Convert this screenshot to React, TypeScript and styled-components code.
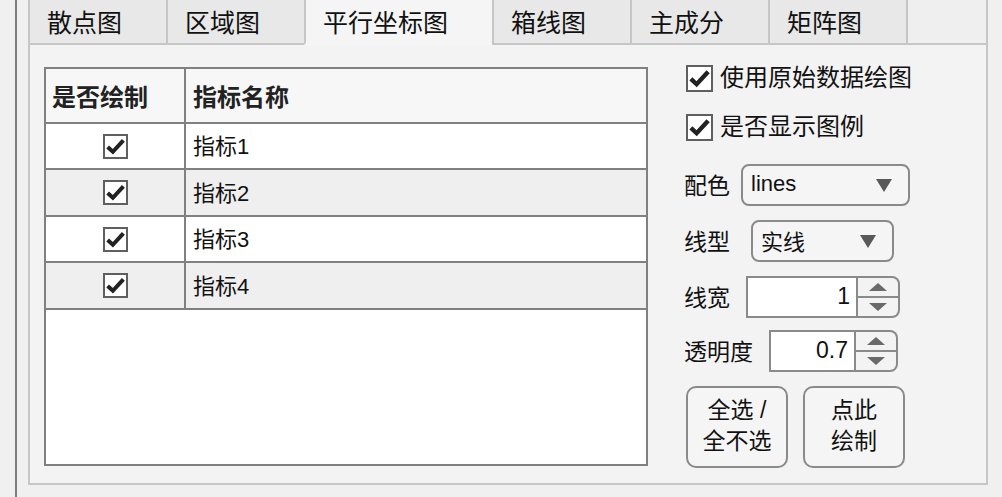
import React from "react";
import styled, { createGlobalStyle } from "styled-components";

const GlobalStyle = createGlobalStyle`
  body {
    margin: 0;
    background: #f0f0f0;
    font-family: "Liberation Sans", "Noto Sans CJK SC", sans-serif;
    color: #1a1a1a;
  }
  * { box-sizing: border-box; }
`;

const tabs = ["散点图", "区域图", "平行坐标图", "箱线图", "主成分", "矩阵图"];
const metrics = ["指标1", "指标2", "指标3", "指标4"];

const Tick = ({ size }: { size: number }): JSX.Element => (
  <svg width={size} height={size} viewBox="0 0 24 24">
    <polyline
      points="3,12.5 9,18 21,5"
      fill="none"
      stroke="#222"
      strokeWidth="4.6"
      strokeLinecap="butt"
      strokeLinejoin="miter"
    />
  </svg>
);

const Spinner = ({ value, width }: { value: string; width: number }): JSX.Element => (
  <SpinBox>
    <SpinField style={{ width }}>{value}</SpinField>
    <SpinArrows>
      <SpinHalf>
        <ArrowUp />
      </SpinHalf>
      <SpinHalf $bottom>
        <ArrowDown />
      </SpinHalf>
    </SpinArrows>
  </SpinBox>
);

const App = (): JSX.Element => {
  return (
    <>
      <GlobalStyle />
      <Page>
        <Frame>
          <TabGroup>
            <TabBar>
              {tabs.map((t, i) => (
                <Tab key={t} $active={i === 2}>
                  {t}
                </Tab>
              ))}
              <TabFiller />
            </TabBar>
            <Panel>
              <Table>
                <HeadRow>
                  <HeadCell $first>是否绘制</HeadCell>
                  <HeadCell>指标名称</HeadCell>
                </HeadRow>
                {metrics.map((m, i) => (
                  <Row key={m} $odd={i % 2 === 1} $h={i % 2 === 0 ? 46 : 47}>
                    <CheckCell>
                      <Box $size={25}>
                        <Tick size={21} />
                      </Box>
                    </CheckCell>
                    <NameCell>{m}</NameCell>
                  </Row>
                ))}
                <EmptyArea />
              </Table>
              <Side>
                <CheckRow $mb={21}>
                  <Box $size={27}>
                    <Tick size={23} />
                  </Box>
                  使用原始数据绘图
                </CheckRow>
                <CheckRow $mb={23}>
                  <Box $size={27}>
                    <Tick size={23} />
                  </Box>
                  是否显示图例
                </CheckRow>
                <Field $mb={14}>
                  <Label $w={57}>配色</Label>
                  <Select $w={169}>
                    <SelectText>lines</SelectText>
                    <Caret />
                  </Select>
                </Field>
                <Field $mb={14}>
                  <Label $w={67}>线型</Label>
                  <Select $w={143}>
                    <SelectText>实线</SelectText>
                    <Caret />
                  </Select>
                </Field>
                <Field $mb={12}>
                  <Label $w={62}>线宽</Label>
                  <Spinner value="1" width={112} />
                </Field>
                <Field $mb={14}>
                  <Label $w={85}>透明度</Label>
                  <Spinner value="0.7" width={87} />
                </Field>
                <Buttons>
                  <Button>
                    全选 /
                    <br />
                    全不选
                  </Button>
                  <Button>
                    点此
                    <br />
                    绘制
                  </Button>
                </Buttons>
              </Side>
            </Panel>
          </TabGroup>
        </Frame>
      </Page>
    </>
  );
};

const Page = styled.div`
  height: 497px;
  padding-left: 15px;
  display: flex;
  overflow: hidden;
`;

const Frame = styled.div`
  border-left: 2px solid #7c7c7c;
  padding-left: 11px;
  display: flex;
  flex-direction: column;
`;

const TabGroup = styled.div`
  width: 960px;
  display: flex;
  flex-direction: column;
`;

const TabBar = styled.div`
  display: flex;
  height: 45px;
`;

const Tab = styled.div<{ $active?: boolean }>`
  height: 45px;
  padding: 3px 44px 0 17px;
  font-size: 25px;
  line-height: 36px;
  font-family: "Noto Sans CJK SC", sans-serif;
  color: #111;
  background: ${(p) => (p.$active ? "#f5f5f5" : "#e8e8e8")};
  border-left: 2px solid #c6c6c6;
  border-bottom: 2px solid ${(p) => (p.$active ? "transparent" : "#c6c6c6")};
`;

const TabFiller = styled.div`
  flex: 1;
  border-left: 2px solid #c6c6c6;
  border-right: 2px solid #c6c6c6;
  border-bottom: 2px solid #c6c6c6;
  background: #efefef;
`;

const Panel = styled.div`
  height: 440px;
  background: #f3f3f3;
  border: 2px solid #c6c6c6;
  border-top: none;
  display: flex;
  align-items: flex-start;
  padding: 22px 0 0 14px;
  gap: 36px;
`;

const Table = styled.div`
  width: 604px;
  height: 399px;
  border: 2px solid #808080;
  background: #fff;
  display: flex;
  flex-direction: column;
`;

const HeadRow = styled.div`
  display: grid;
  grid-template-columns: 140px 1fr;
  height: 55px;
  background: #f7f7f7;
  border-bottom: 2px solid #808080;
`;

const HeadCell = styled.div<{ $first?: boolean }>`
  display: flex;
  align-items: center;
  padding-left: ${(p) => (p.$first ? "6px" : "7px")};
  font-size: 24px;
  font-weight: 700;
  font-family: "Noto Sans CJK SC", sans-serif;
  color: #222;
  border-right: ${(p) => (p.$first ? "2px solid #808080" : "none")};
`;

const Row = styled.div<{ $odd?: boolean; $h: number }>`
  display: grid;
  grid-template-columns: 140px 1fr;
  height: ${(p) => p.$h}px;
  background: ${(p) => (p.$odd ? "#efefef" : "#ffffff")};
  border-bottom: 2px solid #808080;
`;

const CheckCell = styled.div`
  display: flex;
  align-items: center;
  justify-content: center;
  border-right: 2px solid #808080;
`;

const NameCell = styled.div`
  display: flex;
  align-items: center;
  padding-left: 7px;
  padding-bottom: 4px;
  font-size: 22px;
  color: #111;
`;

const EmptyArea = styled.div`
  flex: 1;
  background: #fff;
`;

const Box = styled.div<{ $size: number }>`
  width: ${(p) => p.$size}px;
  height: ${(p) => p.$size}px;
  border: 2px solid #5f5f5f;
  background: #fff;
  display: flex;
  align-items: center;
  justify-content: center;
  flex-shrink: 0;
`;

const Side = styled.div`
  display: flex;
  flex-direction: column;
  margin-top: -3px;
`;

const CheckRow = styled.div<{ $mb: number }>`
  display: flex;
  align-items: center;
  gap: 7px;
  height: 28px;
  margin-left: 2px;
  margin-bottom: ${(p) => p.$mb}px;
  font-size: 24px;
  line-height: 28px;
  color: #111;
`;

const Field = styled.div<{ $mb: number }>`
  display: flex;
  align-items: center;
  height: 42px;
  margin-bottom: ${(p) => p.$mb}px;
`;

const Label = styled.div<{ $w: number }>`
  width: ${(p) => p.$w}px;
  font-size: 23px;
  color: #111;
  flex-shrink: 0;
  padding-bottom: 2px;
`;

const Select = styled.div<{ $w: number }>`
  width: ${(p) => p.$w}px;
  height: 42px;
  border: 2px solid #8a8a8a;
  border-radius: 8px;
  background: #f5f5f5;
  display: flex;
  align-items: center;
  justify-content: space-between;
  padding: 0 16px 2px 8px;
`;

const SelectText = styled.span`
  font-size: 22px;
  color: #111;
`;

const Caret = styled.span`
  width: 0;
  height: 0;
  margin-top: 2px;
  border-left: 8px solid transparent;
  border-right: 8px solid transparent;
  border-top: 13px solid #595959;
`;

const SpinBox = styled.div`
  display: flex;
  height: 42px;
`;

const SpinField = styled.div`
  height: 42px;
  background: #fff;
  border: 2px solid #8a8a8a;
  display: flex;
  align-items: center;
  justify-content: flex-end;
  padding: 0 6px 2px 0;
  font-size: 23px;
  color: #111;
`;

const SpinArrows = styled.div`
  width: 42px;
  height: 42px;
  border: 2px solid #8a8a8a;
  border-left: none;
  border-radius: 0 8px 8px 0;
  background: #f3f3f3;
  display: flex;
  flex-direction: column;
`;

const SpinHalf = styled.div<{ $bottom?: boolean }>`
  flex: 1;
  display: flex;
  align-items: center;
  justify-content: center;
  border-top: ${(p) => (p.$bottom ? "2px solid #8a8a8a" : "none")};
`;

const ArrowUp = styled.span`
  width: 0;
  height: 0;
  border-left: 9px solid transparent;
  border-right: 9px solid transparent;
  border-bottom: 8px solid #6a6a6a;
`;

const ArrowDown = styled.span`
  width: 0;
  height: 0;
  border-left: 9px solid transparent;
  border-right: 9px solid transparent;
  border-top: 8px solid #6a6a6a;
`;

const Buttons = styled.div`
  display: flex;
  gap: 15px;
  margin-left: 2px;
`;

const Button = styled.button`
  width: 102px;
  height: 82px;
  border: 2px solid #8a8a8a;
  border-radius: 10px;
  background: #f5f5f5;
  font-family: "Liberation Sans", "Noto Sans CJK SC", sans-serif;
  font-size: 23px;
  line-height: 31px;
  color: #111;
  padding: 0 0 3px;
  cursor: pointer;
`;

export default App;
